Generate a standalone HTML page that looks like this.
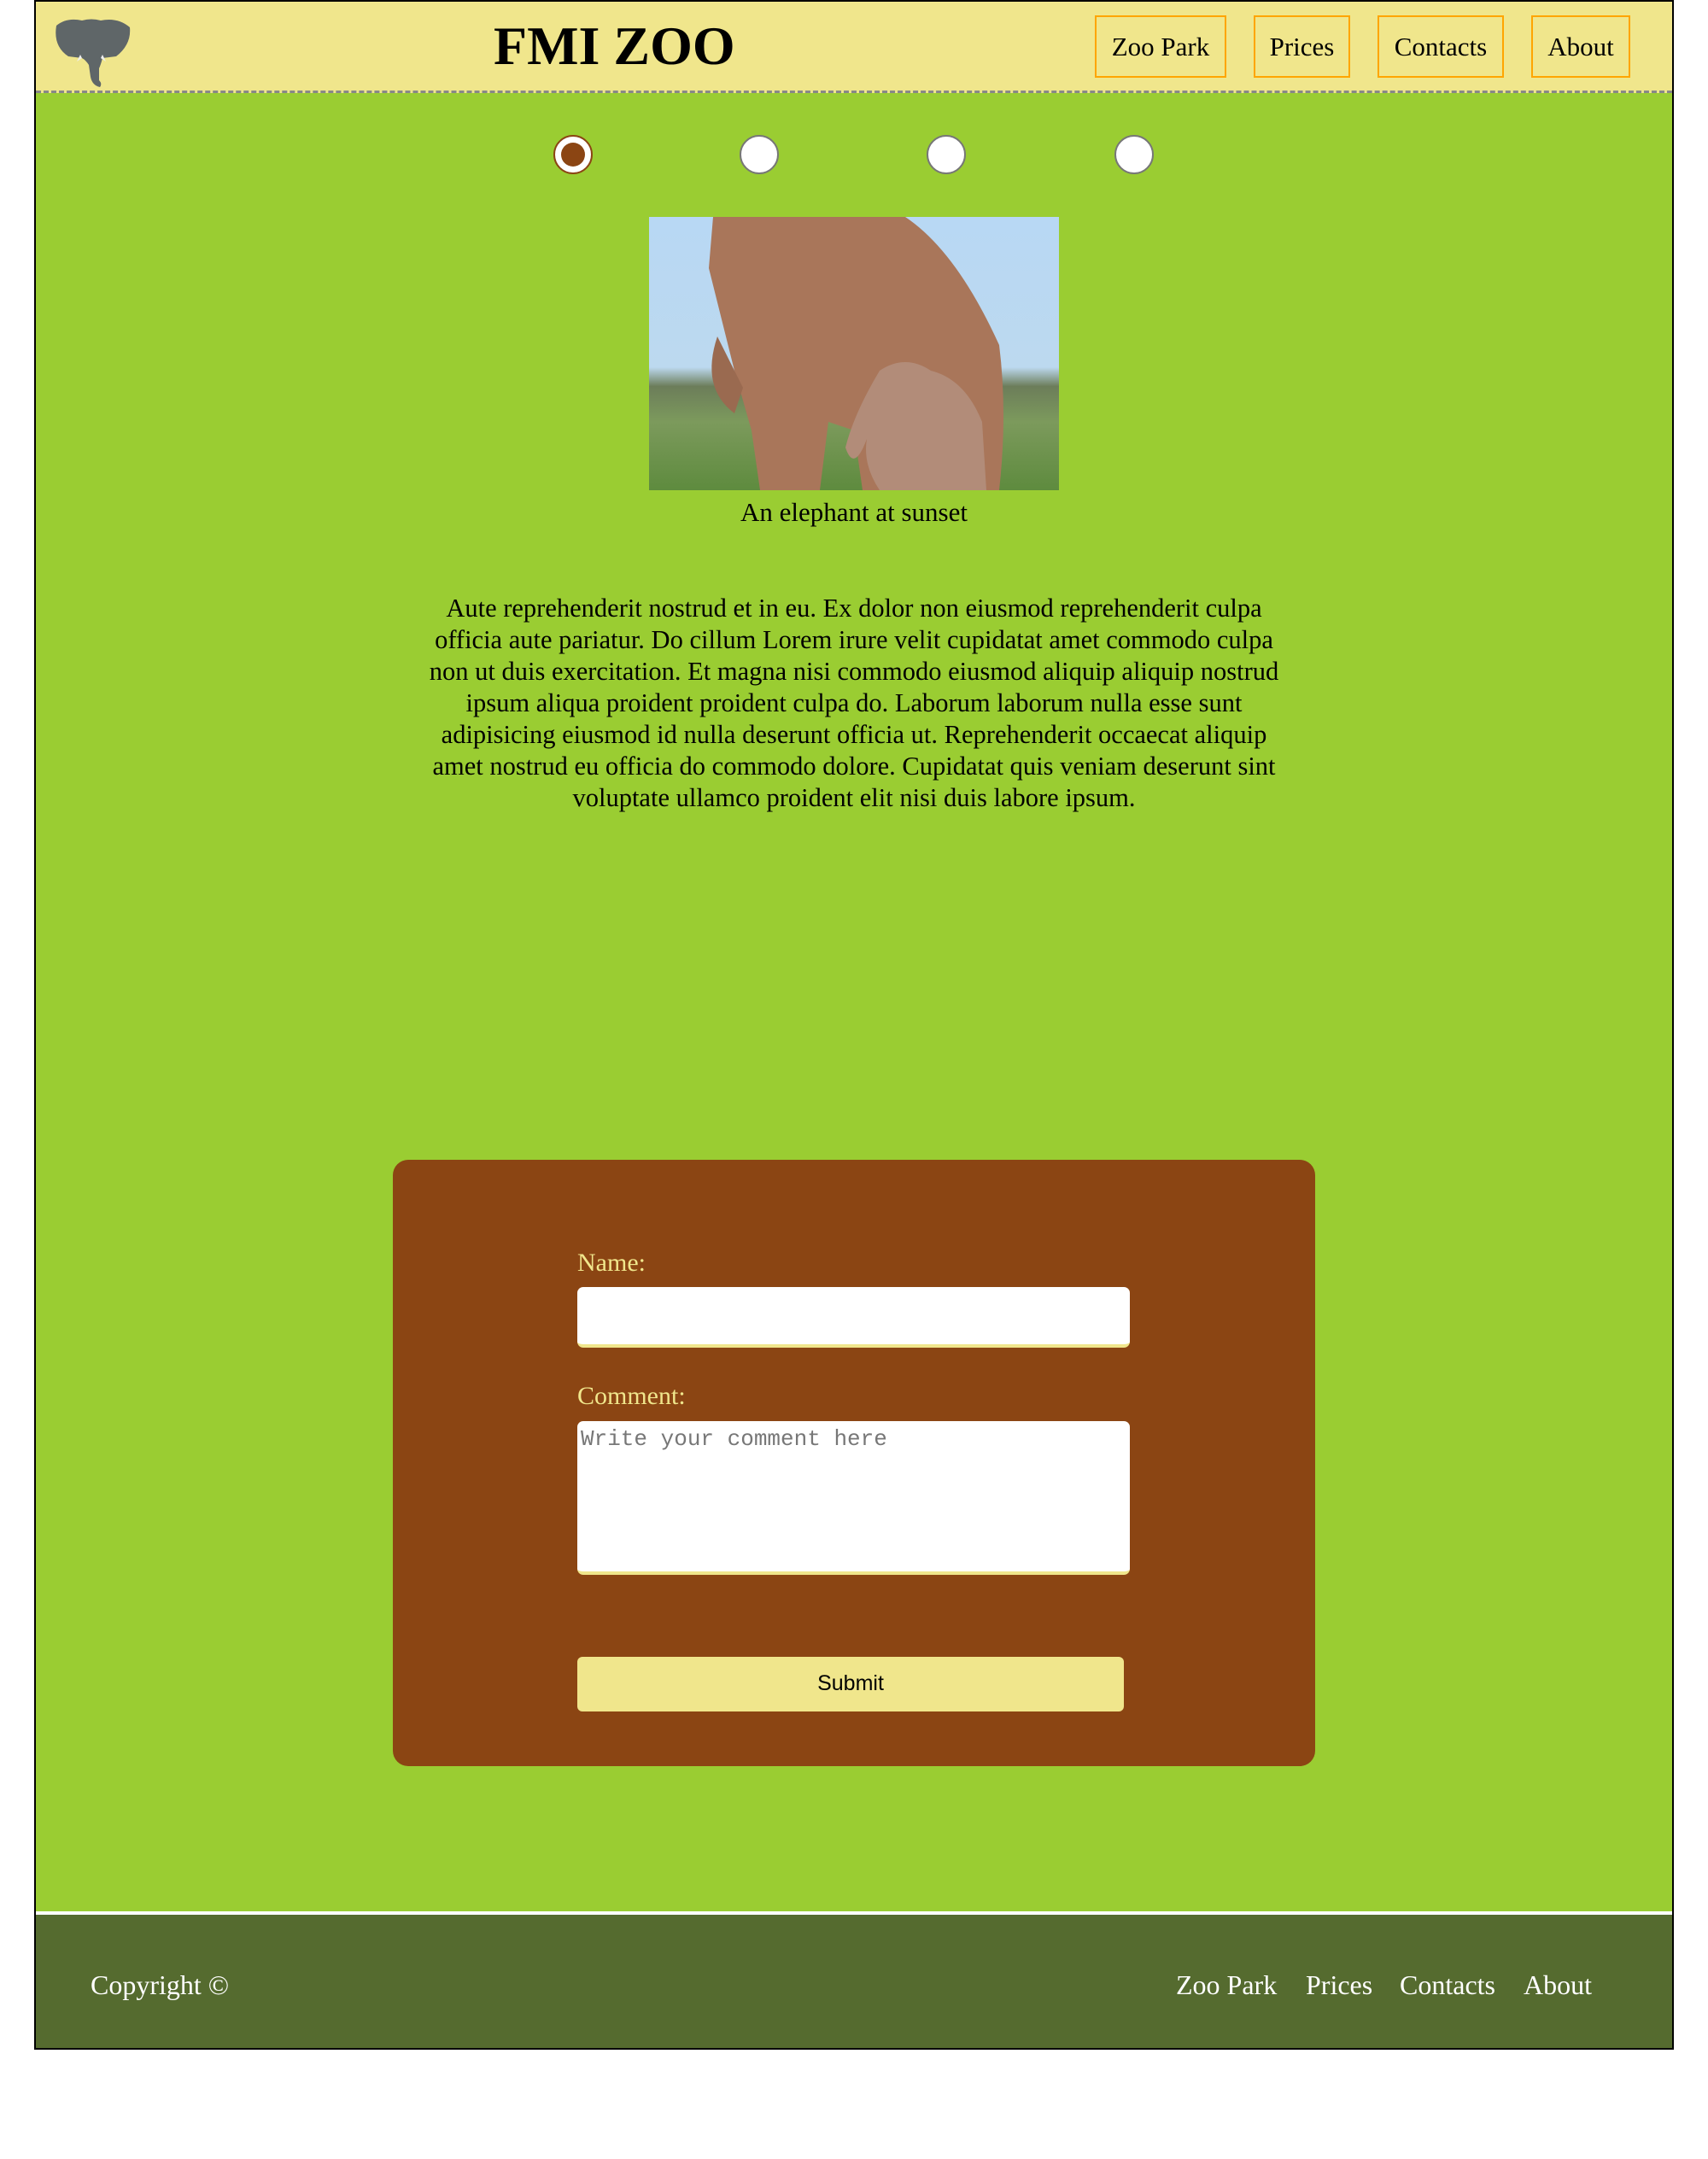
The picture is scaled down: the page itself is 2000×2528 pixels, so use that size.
<!DOCTYPE html>
<html><head><meta charset="utf-8"><style>
*{margin:0;padding:0;box-sizing:border-box}
body{width:2000px;height:2528px;background:#fff;position:relative;font-family:"Liberation Serif",serif;overflow:hidden}
.a{position:absolute}
#page{left:40px;top:0;width:1920px;height:2400px;border:2px solid #000;background:#9acd32}
#hdr{left:42px;top:2px;width:1916px;height:107px;background:#f0e68c;border-bottom:3px dashed #888}
.nav{position:absolute;top:18px;height:73px;border:2px solid #ffa500;font-size:31px;line-height:69px;text-align:center}
.rad{position:absolute;top:158px;width:46px;height:46px;border-radius:50%;background:#fff;border:2px solid #777}
p.t{left:485px;top:694px;width:1030px;font-size:30.5px;line-height:37px;text-align:center}
label{position:absolute;color:#f0e68c;font-size:30px}
.inp{position:absolute;background:#fff;border-radius:7px;border-bottom:4px solid #f0e68c}
.fl{position:absolute;color:#fff;font-size:32px;top:2306px}
</style></head><body>
<div id="page" class="a"></div>
<div id="hdr" class="a"></div>
<svg class="a" style="left:60px;top:20px" width="94" height="82" viewBox="0 0 94 82">
<path d="M6 10 Q18 0 36 4 Q47 1 58 4 Q78 0 92 12 Q94 32 76 46 L60 48 Q58 56 56 60 L56 74 Q60 78 57 82 Q48 80 46 70 L44 56 Q40 50 36 48 L20 46 Q2 34 6 10Z" fill="#5f6668"/>
<path d="M34 44 L30 52 L36 48Z M60 44 L64 52 L58 48Z" fill="#eee"/>
</svg>
<div class="a" style="left:578px;top:16px;font-size:64px;font-weight:bold;line-height:76px">FMI ZOO</div>
<div class="nav" style="left:1282px;width:154px">Zoo Park</div>
<div class="nav" style="left:1468px;width:113px">Prices</div>
<div class="nav" style="left:1613px;width:148px">Contacts</div>
<div class="nav" style="left:1793px;width:116px">About</div>
<div class="rad" style="left:648px;border-color:#8b4513"><div style="position:absolute;left:7px;top:7px;width:28px;height:28px;border-radius:50%;background:#8b4513"></div></div>
<div class="rad" style="left:866px"></div>
<div class="rad" style="left:1085px"></div>
<div class="rad" style="left:1305px"></div>
<svg class="a" style="left:760px;top:254px" width="480" height="320" viewBox="0 0 480 320">
<defs><linearGradient id="g" x1="0" y1="0" x2="0" y2="1"><stop offset="0" stop-color="#b8d8f4"/><stop offset=".55" stop-color="#bcd9ef"/><stop offset=".62" stop-color="#6c7d5a"/><stop offset=".75" stop-color="#7c9a5c"/><stop offset="1" stop-color="#5e8b3e"/></linearGradient></defs>
<rect width="480" height="320" fill="url(#g)"/>
<path d="M75 0 L300 0 Q360 40 410 150 Q420 230 410 320 L350 320 L330 230 L300 260 L280 320 L250 320 L240 250 L210 240 L200 320 L130 320 L120 250 L100 180 Q85 120 70 60Z" fill="#a9765a"/>
<path d="M80 140 Q60 200 100 230 L110 200Z" fill="#9a6a50"/>
<path d="M270 180 Q300 160 330 180 Q370 190 390 240 L395 320 L270 320 Q250 290 255 260 Q240 300 230 270 Q240 230 270 180Z" fill="#b28c79"/>
</svg>
<div class="a" style="left:0;width:2000px;top:582px;text-align:center;font-size:31px">An elephant at sunset</div>
<p class="a t">Aute reprehenderit nostrud et in eu. Ex dolor non eiusmod reprehenderit culpa officia aute pariatur. Do cillum Lorem irure velit cupidatat amet commodo culpa non ut duis exercitation. Et magna nisi commodo eiusmod aliquip aliquip nostrud ipsum aliqua proident proident culpa do. Laborum laborum nulla esse sunt adipisicing eiusmod id nulla deserunt officia ut. Reprehenderit occaecat aliquip amet nostrud eu officia do commodo dolore. Cupidatat quis veniam deserunt sint voluptate ullamco proident elit nisi duis labore ipsum.</p>
<div class="a" style="left:460px;top:1358px;width:1080px;height:710px;background:#8b4513;border-radius:18px"></div>
<label style="left:676px;top:1462px">Name:</label>
<div class="inp" style="left:676px;top:1507px;width:647px;height:71px"></div>
<label style="left:676px;top:1618px">Comment:</label>
<div class="inp" style="left:676px;top:1664px;width:647px;height:180px"><div style="font-family:'Liberation Mono',monospace;font-size:26px;color:#777;padding:6px 4px">Write your comment here</div></div>
<div class="a" style="left:676px;top:1940px;width:640px;height:64px;background:#f0e68c;border-radius:6px;font-family:'Liberation Sans',sans-serif;font-size:25px;text-align:center;line-height:62px">Submit</div>
<div class="a" style="left:42px;top:2238px;width:1916px;height:160px;background:#556b2f;border-top:4px solid #fff"></div>
<div class="fl" style="left:106px">Copyright ©</div>
<div class="fl" style="left:1377px">Zoo Park</div>
<div class="fl" style="left:1529px">Prices</div>
<div class="fl" style="left:1639px">Contacts</div>
<div class="fl" style="left:1784px">About</div>
</body></html>
